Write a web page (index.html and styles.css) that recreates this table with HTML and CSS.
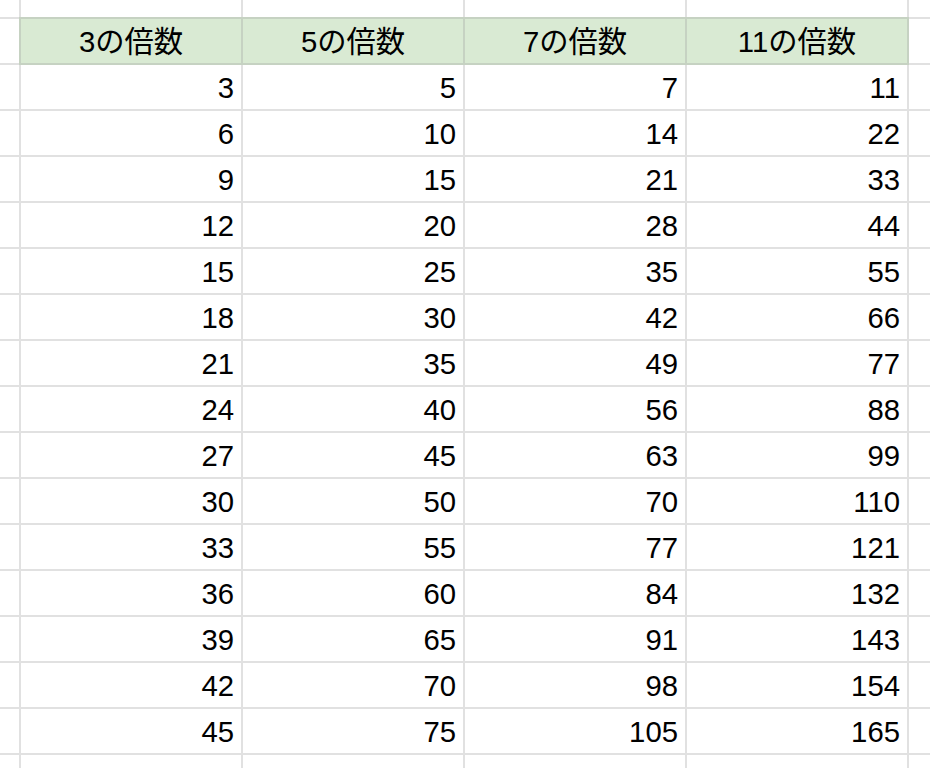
FILE: index.html
```html
<!DOCTYPE html>
<html lang="ja">
<head>
<meta charset="utf-8">
<link rel="stylesheet" href="styles.css">
</head>
<body>
<div class="sheet">
  <div class="c"></div><div class="c"></div><div class="c"></div><div class="c"></div><div class="c"></div><div class="c"></div>
  <div class="c"></div><div class="c h">3の倍数</div><div class="c h">5の倍数</div><div class="c h">7の倍数</div><div class="c h">11の倍数</div><div class="c"></div>
  <div class="c"></div><div class="c n">3</div><div class="c n">5</div><div class="c n">7</div><div class="c n">11</div><div class="c"></div>
  <div class="c"></div><div class="c n">6</div><div class="c n">10</div><div class="c n">14</div><div class="c n">22</div><div class="c"></div>
  <div class="c"></div><div class="c n">9</div><div class="c n">15</div><div class="c n">21</div><div class="c n">33</div><div class="c"></div>
  <div class="c"></div><div class="c n">12</div><div class="c n">20</div><div class="c n">28</div><div class="c n">44</div><div class="c"></div>
  <div class="c"></div><div class="c n">15</div><div class="c n">25</div><div class="c n">35</div><div class="c n">55</div><div class="c"></div>
  <div class="c"></div><div class="c n">18</div><div class="c n">30</div><div class="c n">42</div><div class="c n">66</div><div class="c"></div>
  <div class="c"></div><div class="c n">21</div><div class="c n">35</div><div class="c n">49</div><div class="c n">77</div><div class="c"></div>
  <div class="c"></div><div class="c n">24</div><div class="c n">40</div><div class="c n">56</div><div class="c n">88</div><div class="c"></div>
  <div class="c"></div><div class="c n">27</div><div class="c n">45</div><div class="c n">63</div><div class="c n">99</div><div class="c"></div>
  <div class="c"></div><div class="c n">30</div><div class="c n">50</div><div class="c n">70</div><div class="c n">110</div><div class="c"></div>
  <div class="c"></div><div class="c n">33</div><div class="c n">55</div><div class="c n">77</div><div class="c n">121</div><div class="c"></div>
  <div class="c"></div><div class="c n">36</div><div class="c n">60</div><div class="c n">84</div><div class="c n">132</div><div class="c"></div>
  <div class="c"></div><div class="c n">39</div><div class="c n">65</div><div class="c n">91</div><div class="c n">143</div><div class="c"></div>
  <div class="c"></div><div class="c n">42</div><div class="c n">70</div><div class="c n">98</div><div class="c n">154</div><div class="c"></div>
  <div class="c"></div><div class="c n">45</div><div class="c n">75</div><div class="c n">105</div><div class="c n">165</div><div class="c"></div>
  <div class="c"></div><div class="c"></div><div class="c"></div><div class="c"></div><div class="c"></div><div class="c"></div>
</div>
</body>
</html>
```

FILE: styles.css
```css
html, body {
  margin: 0;
  padding: 0;
  background: #ffffff;
}
body {
  width: 930px;
  height: 768px;
  overflow: hidden;
}
.sheet {
  display: grid;
  grid-template-columns: 19px repeat(4, 220px) 1fr;
  grid-template-rows: 17px repeat(16, 44px) 1fr;
  gap: 2px;
  width: 930px;
  height: 768px;
  background: #e1e1e1;
  font-family: "Liberation Sans", Arial, "Noto Sans CJK JP", sans-serif;
  font-size: 29.3px;
  line-height: 43px;
  color: #000000;
}
.c {
  background: #ffffff;
  overflow: hidden;
  white-space: nowrap;
  padding-top: 1px;
}
.h {
  background: #d9ead3;
  outline: 2px solid #c6d2c2;
  text-align: center;
  position: relative;
}
.n {
  text-align: right;
  padding-right: 7px;
}
```
